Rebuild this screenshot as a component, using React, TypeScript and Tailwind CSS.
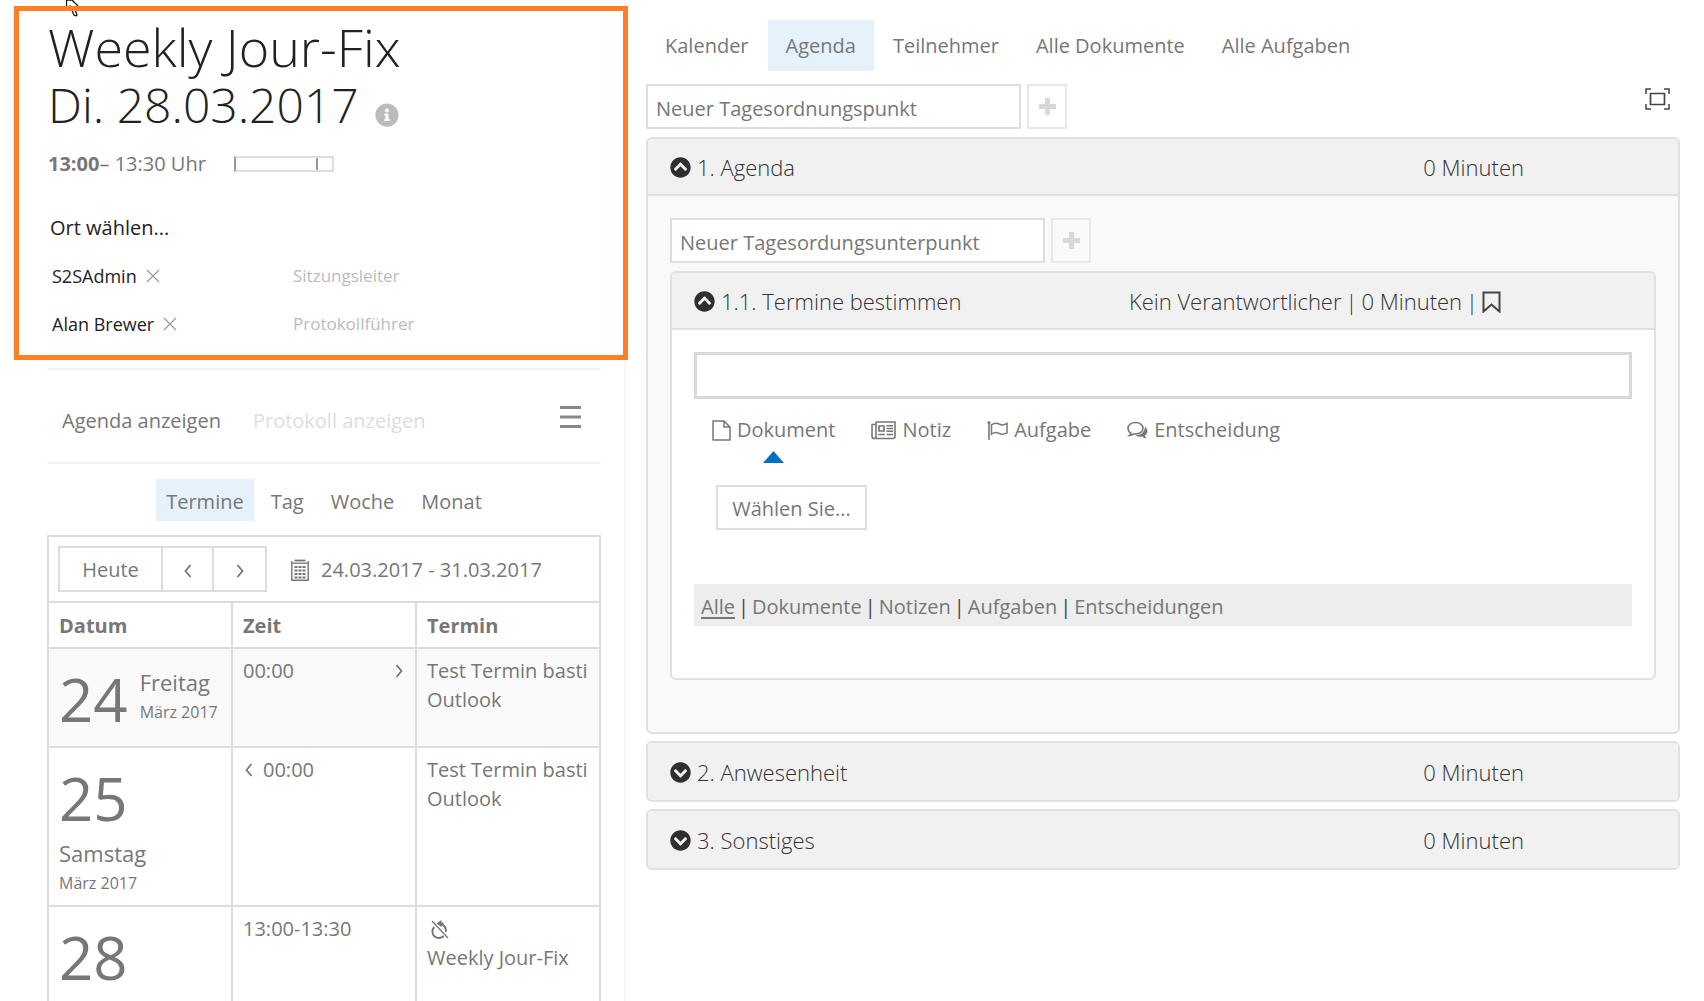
import { useState } from "react";
import {
  FaChevronCircleDown,
  FaChevronCircleUp,
  FaInfoCircle,
} from "react-icons/fa";

const mainTabs = [
  "Kalender",
  "Agenda",
  "Teilnehmer",
  "Alle Dokumente",
  "Alle Aufgaben",
];
const views = ["Termine", "Tag", "Woche", "Monat"];
const filters = [
  "Alle",
  "Dokumente",
  "Notizen",
  "Aufgaben",
  "Entscheidungen",
];
const people = [
  { name: "S2SAdmin", role: "Sitzungsleiter" },
  { name: "Alan Brewer", role: "Protokollführer" },
];

function CloseIcon() {
  return (
    <svg width="14" height="14" viewBox="0 0 14 14" fill="none">
      <path d="M1 1l12 12M13 1L1 13" stroke="#999" strokeWidth="1.2" />
    </svg>
  );
}

function PlusIcon() {
  return (
    <svg width="17" height="17" viewBox="0 0 17 17">
      <path d="M8.5 0v17M0 8.5h17" stroke="#d8d8d8" strokeWidth="5" />
    </svg>
  );
}

function Angle({ dir }: { dir: "left" | "right" }) {
  return (
    <svg width="12" height="16" viewBox="0 0 12 16" fill="none">
      <path
        d={dir === "left" ? "M8.5 2L3.5 8l5 6" : "M3.5 2l5 6l-5 6"}
        stroke="#777"
        strokeWidth="1.8"
      />
    </svg>
  );
}

function CalendarIcon() {
  return (
    <svg width="18" height="22" viewBox="0 0 18 22" fill="none">
      <path d="M.8 2v19.2h16.4V2" stroke="#777" strokeWidth="1.4" />
      <path d="M1 4.2h16" stroke="#777" strokeWidth="1.3" />
      <path d="M3.5 1.5h11" stroke="#777" strokeWidth="1.8" />
      <path
        d="M3.5 8h3m1 0h3m1 0h3M3.5 11.5h3m1 0h3m1 0h3M3.5 15h3m1 0h3m1 0h3M3.5 18.5h3m1 0h3m1 0h3"
        stroke="#777"
        strokeWidth="2.2"
      />
    </svg>
  );
}

function FileIcon() {
  return (
    <svg width="19" height="21" viewBox="0 0 19 21" fill="none">
      <path
        d="M1 1h11l6 6v13H1zM12 1v6h6"
        stroke="#777"
        strokeWidth="1.5"
        strokeLinejoin="round"
      />
    </svg>
  );
}

function NewsIcon() {
  return (
    <svg width="25" height="19" viewBox="0 0 25 19" fill="none">
      <path
        d="M5 1h19v14.5q0 2-2 2H3q-2 0-2-2V3.5h4M5 1v14.5q0 2-2 2"
        stroke="#777"
        strokeWidth="1.6"
      />
      <path d="M8 5h5v5H8z" stroke="#777" strokeWidth="1.7" />
      <path
        d="M15.5 4.7H22M15.5 7.5H22M15.5 10.3H22M7.3 13.5h6.5M15.5 13.5H22"
        stroke="#777"
        strokeWidth="1.5"
      />
    </svg>
  );
}

function FlagIcon() {
  return (
    <svg width="21" height="19" viewBox="0 0 21 19" fill="none">
      <path d="M2 1v18" stroke="#777" strokeWidth="1.6" />
      <circle cx="2" cy="1.8" r="1.6" fill="#777" />
      <path
        d="M4.5 3.8q4-2.8 7.5-.8t8-.5v9.3q-4.500 2.4-8 .5t-7.5.8z"
        stroke="#777"
        strokeWidth="1.5"
      />
    </svg>
  );
}

function CommentsIcon() {
  return (
    <svg width="21" height="19" viewBox="0 0 21 19" fill="none">
      <path
        d="M8.5 1.5c4.2 0 7.5 2.5 7.5 5.8s-3.3 5.7-7.5 5.7q-1 0-2-.2-1.5 1.4-4 1.7 1.3-1 1.3-2.5C1.8 11 1 9.200 1 7.300c0-3.300 3.300-5.800 7.500-5.800z"
        stroke="#777"
        strokeWidth="1.6"
      />
      <path
        d="M17.8 5.5c3.5 3 3.3 6.5.2 9q.2 1.8 2 3-3 0-5-2-3.5.8-6.500-1.300c5.500.3 9.600-3 9.300-8.700z"
        fill="#777"
      />
    </svg>
  );
}

function BookmarkIcon() {
  return (
    <svg width="19" height="22" viewBox="0 0 19 22" fill="none">
      <path d="M1.5 1.5h16v19l-8-7-8 7z" stroke="#444" strokeWidth="2" />
    </svg>
  );
}

function FullscreenIcon() {
  return (
    <svg width="25" height="22" viewBox="0 0 25 22" fill="none">
      <path
        d="M1 6V1h5M19 1h5v5M24 16v5h-5M6 21H1v-5"
        stroke="#444"
        strokeWidth="1.5"
      />
      <path d="M5.5 5.5h14v11h-14z" stroke="#444" strokeWidth="1.7" />
    </svg>
  );
}

// crossed-out arrow of a changed series appointment
function ExceptionIcon() {
  return (
    <svg width="18" height="19" viewBox="0 0 18 19" fill="none">
      <path d="M1 1l16 17" stroke="#777" strokeWidth="1.4" />
      <path
        d="M3.2 7a6.3 6.3 0 0 0 9.5 9M10.5 4.5q5.2 2 4.3 7.5"
        stroke="#777"
        strokeWidth="1.9"
      />
      <path d="M5.5 3.5L10.5 0v2.5h2v3h-2V7z" fill="#777" />
    </svg>
  );
}

function Cursor() {
  return (
    <svg
      className="absolute left-[66px] top-0"
      width="18"
      height="20"
      viewBox="0 0 18 20"
    >
      <path
        d="M.5 0v8.500L4 6l3.500 8q1.500 3 3.500 1L8 7h5L6 0z"
        fill="#fff"
        stroke="#111"
        strokeWidth="1.3"
      />
    </svg>
  );
}

function AddItem({ placeholder }: { placeholder: string }) {
  return (
    <div className="flex gap-[6px]">
      <input
        aria-label={placeholder}
        placeholder={placeholder}
        className="h-[45px] w-[375px] border-2 border-[#dedede] bg-white px-2 pt-[3px] text-[20px] text-[#777] placeholder:text-[#777]"
      />
      <button
        aria-label="Hinzufügen"
        className="flex h-[45px] w-10 items-center justify-center border-2 border-[#e8e8e8]"
      >
        <PlusIcon />
      </button>
    </div>
  );
}

type HeaderProps = { title: string; open?: boolean };

function ItemTitle({ title, open }: HeaderProps) {
  return (
    <button className="flex items-center gap-[6px]">
      {open ? (
        <FaChevronCircleUp size={21} className="text-[#2f2f2f]" />
      ) : (
        <FaChevronCircleDown size={21} className="text-[#2f2f2f]" />
      )}
      {title}
    </button>
  );
}

function TopHeader({ title, open }: HeaderProps) {
  return (
    <div
      className={`flex items-center justify-between bg-[#f1f1f1] pl-[22px] pr-[154px] pt-[2px] text-[22px] font-light text-[#333] ${open ? "h-[55px]" : "h-[57px]"}`}
    >
      <ItemTitle title={title} open={open} />
      <span>0 Minuten</span>
    </div>
  );
}

function DateCell({
  day,
  name,
  stacked,
}: {
  day: string;
  name?: string;
  stacked?: boolean;
}) {
  return (
    <td className="border-2 border-[#dcdcdc] px-[10px] align-top">
      <div className={stacked ? "pt-[10px]" : "flex items-center gap-3 pt-[10px]"}>
        <div className="text-[60px] leading-[80px]">{day}</div>
        {name && (
          <div className={stacked ? "" : "pb-1"}>
            <div className="text-[22px] leading-[30px]">{name}</div>
            <div className="text-[16px] leading-[30px]">März 2017</div>
          </div>
        )}
      </div>
    </td>
  );
}

export default function App() {
  const [tab, setTab] = useState("Agenda");
  const [view, setView] = useState("Termine");
  const [filter, setFilter] = useState("Alle");

  const cell = "border-2 border-[#dcdcdc] px-[10px] pt-[7px] align-top";

  return (
    <div className="relative flex h-screen overflow-hidden bg-white font-['Open_Sans',sans-serif] text-[20px] text-[#777]">
      <Cursor />
      <aside className="relative w-[626px] shrink-0 border-r-2 border-[#f7f7f7]">
        <section className="ml-[14px] mt-[6px] mr-[-4px] h-[354px] border-[5px] border-[#ff7f27] pl-[29px] pt-[7px] text-[#222]">
          <h1 className="font-light leading-[58px]">
            <span className="block text-[52px]">Weekly Jour-Fix</span>
            <span className="flex items-center gap-4 text-[48px]">
              Di. 28.03.2017
              <FaInfoCircle size={24} className="mt-5 text-[#bbb]" />
            </span>
          </h1>
          <div className="mt-[15px] flex items-center gap-7 text-[#777]">
            <span className="leading-[30px]">
              <b>13:00</b>– 13:30 Uhr
            </span>
            <span className="flex h-4 w-[100px] border-2 border-[#ddd] border-l-[#999]">
              <span className="w-[82px] border-r-2 border-[#999]" />
            </span>
          </div>
          <button className="mt-[34px] ml-[2px] block leading-[30px]">
            Ort wählen...
          </button>
          {people.map((p) => (
            <div
              key={p.name}
              className="mt-[18px] ml-[4px] flex text-[18px] leading-[30px]"
            >
              <span className="flex w-[241px] items-center gap-[9px]">
                {p.name}
                <button aria-label={`${p.name} entfernen`}>
                  <CloseIcon />
                </button>
              </span>
              <span className="text-[17px] text-[#bbb]">{p.role}</span>
            </div>
          ))}
        </section>

        <div className="ml-[47px] mr-[23px]">
          <div className="mt-[8px] flex h-[96px] items-center border-y-2 border-[#f2f2f2] pl-[15px] pr-5 pt-[10px]">
            <button>Agenda anzeigen</button>
            <button className="ml-8 text-[#ddd]" disabled>
              Protokoll anzeigen
            </button>
            <button aria-label="Menü" className="mb-2 ml-auto">
              <svg width="21" height="23" viewBox="0 0 21 23">
                <path
                  d="M0 1.5h21M0 11h21M0 20.5h21"
                  stroke="#888"
                  strokeWidth="3"
                />
              </svg>
            </button>
          </div>
          <nav className="mt-[15px] flex justify-center gap-[7px]">
            {views.map((v) => (
              <button
                key={v}
                onClick={() => setView(v)}
                className={`h-[42px] px-[10px] pt-1 ${v === view ? "bg-[#e5f2fb]" : ""}`}
              >
                {v}
              </button>
            ))}
          </nav>
          <div className="mt-[14px] flex h-[66px] items-center border-2 border-b-0 border-[#dcdcdc] pl-[9px]">
            <div className="flex h-[46px] divide-x-2 divide-[#dcdcdc] border-2 border-[#dcdcdc]">
              <button className="w-[103px] pt-[2px]">Heute</button>
              <button
                aria-label="Zurück"
                className="flex w-[51px] items-center justify-center pt-1"
              >
                <Angle dir="left" />
              </button>
              <button
                aria-label="Weiter"
                className="flex w-[51px] items-center justify-center pt-1"
              >
                <Angle dir="right" />
              </button>
            </div>
            <button className="ml-6 flex items-center gap-3 pt-[2px]">
              <CalendarIcon />
              24.03.2017 - 31.03.2017
            </button>
          </div>
          <table className="w-full table-fixed border-collapse leading-[29px]">
            <thead>
              <tr className="h-[46px] text-left">
                {["Datum", "Zeit", "Termin"].map((h) => (
                  <th
                    key={h}
                    className="border-2 border-[#dcdcdc] px-[10px] font-bold"
                  >
                    {h}
                  </th>
                ))}
              </tr>
            </thead>
            <tbody>
              <tr className="h-[99px] bg-[#fafafa]">
                <DateCell day="24" name="Freitag" />
                <td className={cell}>
                  <div className="flex items-center justify-between">
                    00:00 <Angle dir="right" />
                  </div>
                </td>
                <td className={cell}>
                  Test Termin basti
                  <br />
                  Outlook
                </td>
              </tr>
              <tr className="h-[159px]">
                <DateCell day="25" name="Samstag" stacked />
                <td className={cell}>
                  <div className="flex items-center gap-2">
                    <Angle dir="left" />
                    00:00
                  </div>
                </td>
                <td className={cell}>
                  Test Termin basti
                  <br />
                  Outlook
                </td>
              </tr>
              <tr className="h-[159px]">
                <DateCell day="28" stacked />
                <td className={cell}>13:00-13:30</td>
                <td className={cell}>
                  <div className="flex h-[29px] items-end pb-1 pl-1">
                    <ExceptionIcon />
                  </div>
                  Weekly Jour-Fix
                </td>
              </tr>
            </tbody>
          </table>
        </div>
      </aside>

      <main className="min-w-0 grow pl-[20px] pr-[24px] pt-[20px]">
        <nav className="flex gap-px pl-px">
          {mainTabs.map((t) => (
            <button
              key={t}
              onClick={() => setTab(t)}
              className={`h-[51px] px-[18px] ${t === tab ? "bg-[#e5f2fb]" : ""}`}
            >
              {t}
            </button>
          ))}
        </nav>
        <div className="mt-[13px] flex items-start justify-between pr-[10px]">
          <AddItem placeholder="Neuer Tagesordnungspunkt" />
          <button aria-label="Vollbild" className="mt-1">
            <FullscreenIcon />
          </button>
        </div>

        <section className="mt-[8px] overflow-hidden rounded-md border-2 border-[#e0e0e0] bg-[#f9f9f9]">
          <TopHeader title="1. Agenda" open />
          <div className="border-t-2 border-[#e0e0e0] px-[22px] pb-[52px] pt-[22px]">
            <AddItem placeholder="Neuer Tagesordungsunterpunkt" />
            <section className="mt-[8px] overflow-hidden rounded-md border-2 border-[#e0e0e0] bg-white">
              <div className="flex h-[57px] items-center justify-between border-b-2 border-[#e0e0e0] bg-[#f1f1f1] pl-[22px] pr-[153px] pt-[2px] text-[22px] font-light text-[#333]">
                <ItemTitle title="1.1. Termine bestimmen" open />
                <div className="flex items-center gap-1">
                  <span>Kein Verantwortlicher</span>
                  <span>|</span>
                  <span>0 Minuten</span>
                  <span>|</span>
                  <button aria-label="Merken">
                    <BookmarkIcon />
                  </button>
                </div>
              </div>
              <div className="px-[22px] pb-[52px] pt-[22px]">
                <input
                  aria-label="Titel"
                  className="block h-[47px] w-full border-[3px] border-[#d9d9d9] px-2"
                />
                <div className="mt-[16px] flex gap-9 pl-[18px] leading-[30px]">
                  <button className="flex items-center gap-[6px]">
                    <FileIcon />
                    Dokument
                  </button>
                  <button className="flex items-center gap-[6px]">
                    <NewsIcon />
                    Notiz
                  </button>
                  <button className="flex items-center gap-[6px]">
                    <FlagIcon />
                    Aufgabe
                  </button>
                  <button className="flex items-center gap-[6px]">
                    <CommentsIcon />
                    Entscheidung
                  </button>
                </div>
                <svg
                  className="ml-[69px] mt-[6px]"
                  width="21"
                  height="12"
                  viewBox="0 0 21 12"
                >
                  <path d="M10.5 0L21 12H0z" fill="#0072c6" />
                </svg>
                <button className="ml-[22px] mt-[22px] block h-[45px] w-[151px] border-2 border-[#dedede] pt-[2px]">
                  Wählen Sie...
                </button>
                <div className="mt-[54px] flex h-[42px] items-center gap-[3px] bg-[#ededed] px-[7px] pt-1">
                  {filters.map((f, i) => (
                    <span key={f} className="flex gap-[3px]">
                      {i > 0 && <span className="text-[#444]">|</span>}
                      <button
                        onClick={() => setFilter(f)}
                        className={
                          f === filter
                            ? "underline decoration-2 underline-offset-3"
                            : ""
                        }
                      >
                        {f}
                      </button>
                    </span>
                  ))}
                </div>
              </div>
            </section>
          </div>
        </section>
        {["2. Anwesenheit", "3. Sonstiges"].map((t) => (
          <section
            key={t}
            className="mt-[7px] overflow-hidden rounded-md border-2 border-[#e0e0e0]"
          >
            <TopHeader title={t} />
          </section>
        ))}
      </main>
    </div>
  );
}
